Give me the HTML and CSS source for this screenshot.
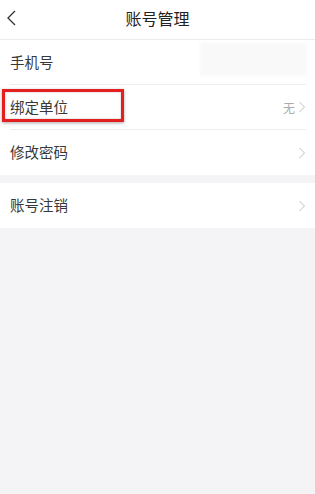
FILE: index.html
```html
<!DOCTYPE html>
<html lang="zh-CN">
<head>
    <meta charset="UTF-8">
    <meta name="viewport" content="width=device-width, initial-scale=1.0">
    <title>账号管理</title>
    <link rel="stylesheet" href="styles.css">
</head>
<body>
    <div class="nav-bar">
        <span class="nav-back">
            <svg width="12" height="18" viewBox="0 0 12 18"><path d="M9 2 L2 9 L9 16" fill="none" stroke="#333" stroke-width="1.3"/></svg>
        </span>
        <h1 class="nav-title">账号管理</h1>
    </div>

    <div class="group">
        <div class="row">
            <span class="row-label">手机号</span>
            <span class="masked"></span>
        </div>
        <div class="row">
            <span class="row-label highlight">绑定单位</span>
            <span class="row-value">无</span>
            <span class="arrow"><svg width="8" height="12" viewBox="0 0 8 12"><path d="M1.5 1 L6.5 6 L1.5 11" fill="none" stroke="#c0c0c0" stroke-width="1"/></svg></span>
        </div>
        <div class="row last">
            <span class="row-label">修改密码</span>
            <span class="arrow"><svg width="8" height="12" viewBox="0 0 8 12"><path d="M1.5 1 L6.5 6 L1.5 11" fill="none" stroke="#c0c0c0" stroke-width="1"/></svg></span>
        </div>
    </div>

    <div class="group">
        <div class="row last">
            <span class="row-label">账号注销</span>
            <span class="arrow"><svg width="8" height="12" viewBox="0 0 8 12"><path d="M1.5 1 L6.5 6 L1.5 11" fill="none" stroke="#c0c0c0" stroke-width="1"/></svg></span>
        </div>
    </div>
</body>
</html>
```

FILE: styles.css
```css
body {
    margin: 0;
    background: #f4f4f6;
    font-family: "Noto Sans CJK SC", "Noto Sans", sans-serif;
    color: #333;
    min-height: 100vh;
}

/* top bar */
.nav-bar {
    position: relative;
    height: 40px;
    background: #fff;
    border-bottom: 1px solid #ececec;
    display: flex;
    align-items: center;
    justify-content: center;
    box-sizing: border-box;
}

.nav-back {
    position: absolute;
    left: 6px;
    top: 9px;
    display: flex;
}

.nav-title {
    margin: 0;
    font-size: 16px;
    font-weight: normal;
    color: #222;
    line-height: 1;
    margin-top: -3px;
}

/* list groups */
.group {
    background: #fff;
    padding: 0 9px 0 10px;
    margin-bottom: 8px;
}

.row {
    height: 45px;
    display: flex;
    align-items: center;
    border-bottom: 1px solid #eee;
    box-sizing: border-box;
}

.row.last {
    border-bottom: none;
}

.row-label {
    flex: 1;
    font-size: 14.5px;
    color: #383838;
    line-height: 1;
}

.row-label.highlight {
    position: relative;
}

/* the red marker around 绑定单位 */
.row-label.highlight::before {
    content: '';
    position: absolute;
    left: -8px;
    top: -11px;
    width: 116px;
    height: 27px;
    border: 3px solid #e41f1f;
    box-shadow: 0 1px 3px rgba(0, 0, 0, 0.35), inset 0 0 2px rgba(0, 0, 0, 0.3);
}

.row-value {
    font-size: 12px;
    color: #aaa;
    margin-right: 3px;
}

.arrow {
    display: flex;
}

.masked {
    width: 106px;
    height: 33px;
    margin-top: -6px;
    background: #f9f9f9;
    filter: blur(1.5px);
}
```
